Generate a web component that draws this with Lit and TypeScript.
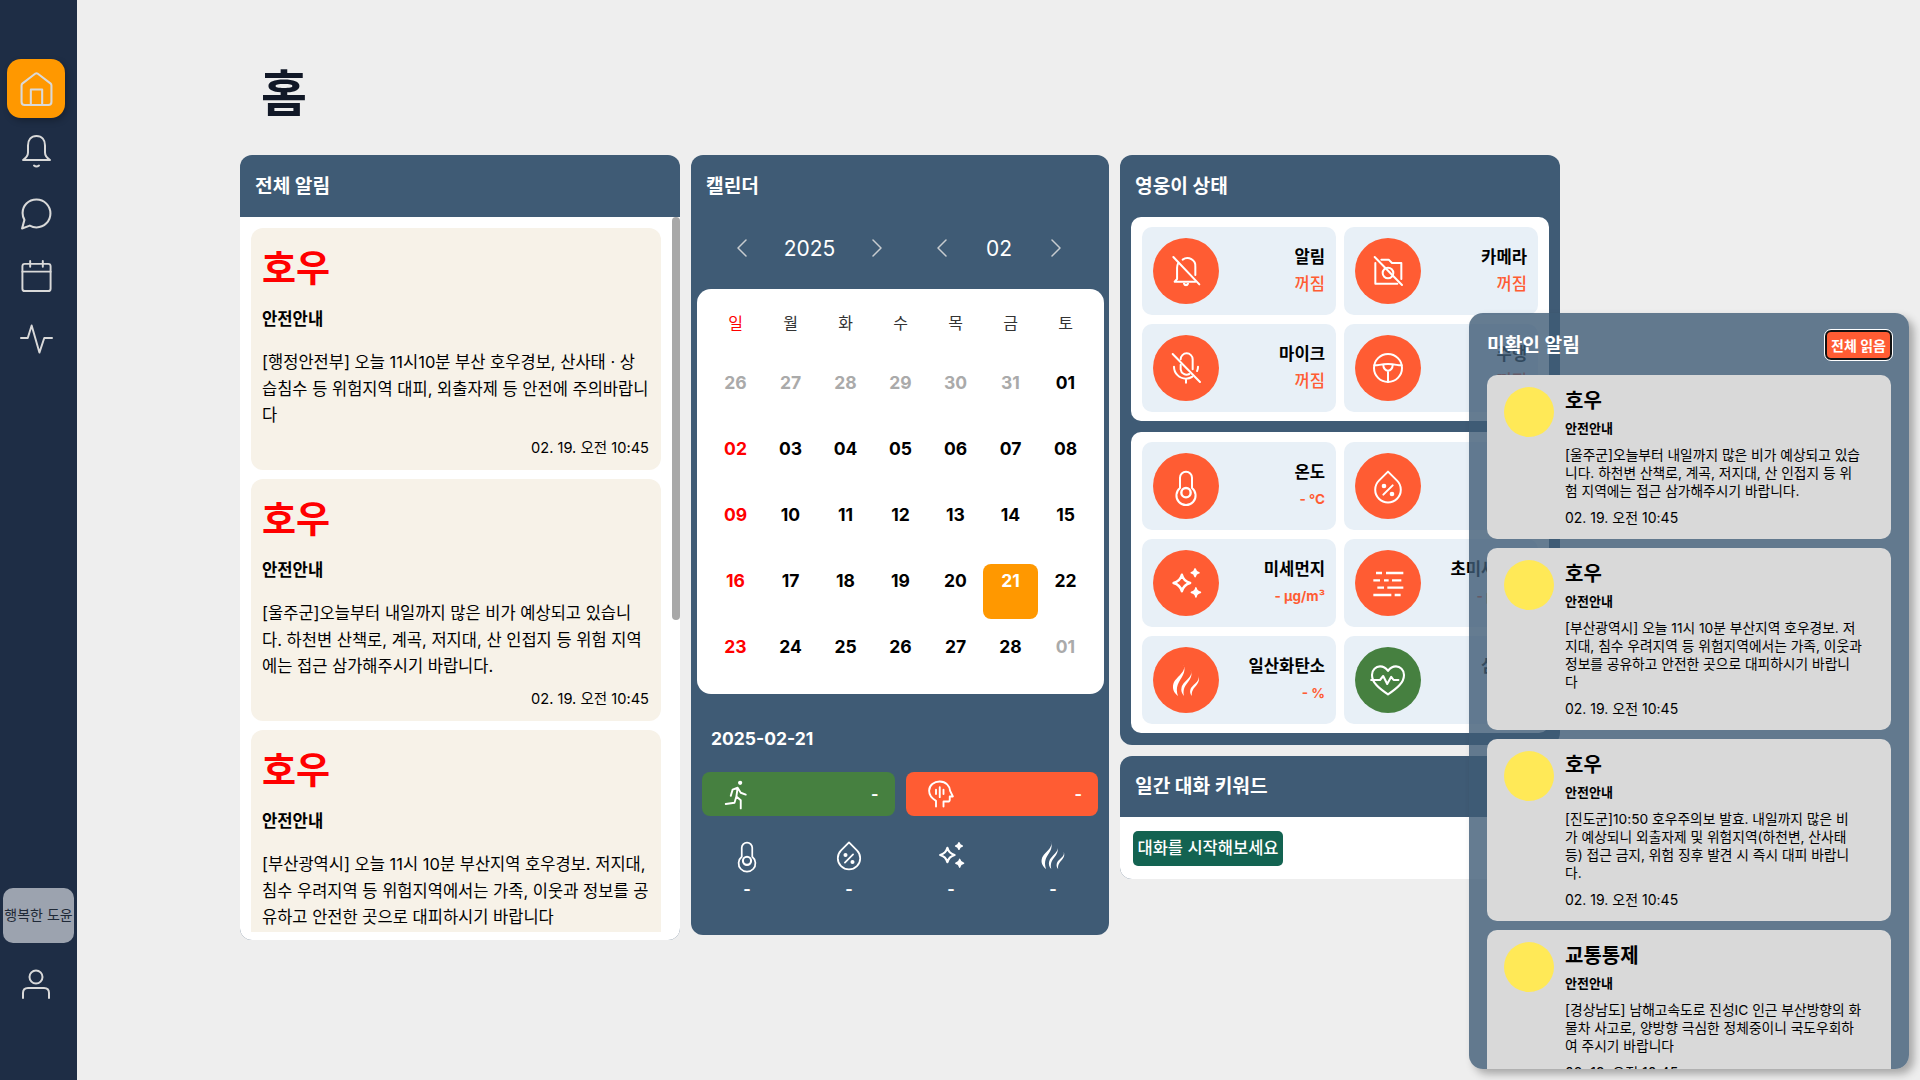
import {LitElement, html, css, svg} from 'lit';
import {customElement} from 'lit/decorators.js';

const icon = (body: unknown, cls = 'i24', box = '0 0 24 24') => html`<svg class=${cls} viewBox=${box} fill="none" stroke="currentColor" stroke-width="1.5" stroke-linecap="round" stroke-linejoin="round">${body}</svg>`;

const I = {
  home: svg`<path d="M1 13q0-1 1-2L14.500 1.500q1-.7 2 0L29 11q1 1 1 2v16a3 3 0 0 1-3 3H4a3 3 0 0 1-3-3z"/><path d="M10 32V17h11v15"/>`,
  bell: svg`<path d="M15.500 2c-5.500 0-8.500 4-8.500 9.500v7c0 3-2 5.500-5 7.500h27c-3-2-5-4.500-5-7.500v-7C24 6 21 2 15.500 2z"/><path d="M13 31.500c1.500 1.200 3.500 1.200 5 0"/>`,
  chat: svg`<path d="M16 2C8 2 2.500 8 2.500 15c0 2.500.7 4.800 1.800 6.700L2 30l7.500-2.700c2 1.100 4.200 1.700 6.500 1.700 7.500 0 13.500-6 13.500-13.500S23.500 2 16 2z"/>`,
  cal: svg`<rect x="2" y="5" width="29" height="28" rx="2.500"/><path d="M2 13h29M10 2v6M23 2v6"/>`,
  pulse: svg`<path d="M1 15h7L12 2l8 28 5-15h8"/>`,
  user: svg`<circle cx="15" cy="8" r="6.500"/><path d="M2 29v-5c0-3 2-5 5-5h16c3 0 5 2 5 5v5"/>`,
  left: svg`<path d="M9 1 1 9l8 8"/>`,
  right: svg`<path d="m1 1 8 8-8 8"/>`,
  bellOff: svg`<path d="M9.500 3.500A6 6 0 0 1 19 9v6M6 6.500C5.500 7.500 5.300 8.500 5.300 9.500V18L3.500 20H19"/><path d="M10.500 21.500c.5 1.500 2.500 1.500 3 0" fill="currentColor"/><path d="M2.500 1.500 22 22"/>`,
  camOff: svg`<path d="M2.500 6v15.500H19M22 18V6h-7l-2.500-2.500H7"/><circle cx="12" cy="13.500" r="4"/><path d="M2 1.500 22.500 22.500"/>`,
  micOff: svg`<path d="M8 5.500a4.500 4.500 0 0 1 9 0V13M8 9.500V13a4.500 4.500 0 0 0 6.500 3.500"/><path d="M3 11a9 9 0 0 0 9 9c1.800 0 3.500-.6 4.800-1.500M21 11c0 1.200-.2 2.300-.7 3.300M12 20v3"/><path d="M2 1.500 22.500 22.500"/>`,
  wheel: svg`<circle cx="12" cy="12" r="10.500"/><path d="M1.800 10c3 .2 4.500-1 10.200-1s7.200 1.200 10.200 1M8.500 10c0 2 1.500 4 3.500 4s3.500-2 3.500-4M12 14v8.500"/>`,
  thermo: svg`<path d="M7.500 13.500V5.800a4.500 4.500 0 0 1 9 0v7.700a7.200 7.200 0 1 1-9 0z"/><circle cx="12" cy="17" r="3.500" stroke-width="1.800"/>`,
  drop: svg`<path d="M12 1.200 5.200 8a9.600 9.600 0 1 0 13.600 0z"/><path d="m8.500 18.500 7-7"/><circle cx="9" cy="12" r="1" fill="currentColor"/><circle cx="15" cy="18" r="1" fill="currentColor"/>`,
  spark: svg`<g transform="translate(12 12) scale(1.240) translate(-12 -12)"><path d="M9.500 7c.8 3 2 4.200 5 5-3 .8-4.200 2-5 5-.8-3-2-4.200-5-5 3-.8 4.200-2 5-5z" stroke-width="1.500"/><path d="M17.500 3.500c.3 1.500.8 2 2.300 2.300-1.500.3-2 .8-2.300 2.300-.3-1.500-.8-2-2.300-2.300 1.500-.3 2-.8 2.300-2.300zM18 15c.3 1.700 1 2.400 2.700 2.700-1.700.3-2.400 1-2.700 2.700-.3-1.700-1-2.400-2.700-2.700 1.700-.3 2.400-1 2.700-2.700z" fill="currentColor" stroke-width="1"/></g>`,
  flame: svg`<g fill="currentColor" stroke="none"><path d="M10 0C13 6 4.200 9.500 2.500 15c-1 3.500.6 6.800 3.500 9-1-3-1.200-5.800-.2-8.500C7.500 11 13 6.500 10 0z"/><path d="M15.500 4.500c2.500 5-5.500 8-6.800 13-.7 2.500.2 4.800 1.800 6.500-.5-2-.5-4 .2-6 1.600-4 7.300-7.500 4.800-13.500z"/><path d="M21 9c2 4.500-5 6.500-5.800 10.500-.4 1.800.2 3.300 1.200 4.500-.2-1.500-.1-2.900.6-4.200C18.500 16.500 23.500 14 21 9z"/></g>`,
  heart: svg`<g transform="translate(12 12) scale(1.200) translate(-12 -12)"><path d="M12 21C6 17 2 13.500 2 8.800 2 5.500 4.500 3.500 7 3.500c2 0 3.700 1 5 2.800 1.300-1.800 3-2.800 5-2.800 2.500 0 5 2 5 5.300 0 4.700-4 8.200-10 12.200z" stroke-width="1.300"/><path d="M1.500 12h5.500l2-2.500 2.500 5 2.500-4.500 1.500 2h3" stroke-width="1.300"/></g>`,
  dust: svg`<path d="M3 4.500h4.500M10.500 4.500h13M1 10h5M9 10h3.500M15 10h7M4 15.500h5M11.500 15.500h12M1 21h13.500M17 21h4.500" stroke-width="1.700" stroke-linecap="butt"/>`,
  run: svg`<circle cx="14.500" cy="3" r="1.700" fill="currentColor" stroke="none"/><path d="M12.500 7 8.500 8.500l-1.500 5M12.500 7l-1 7 3.500 3v6.500M11.500 14l-1.500 5-7 1M12.500 7l2.500 4 4 1.500"/>`,
  face: svg`<path d="M8 22v-4.500C4.500 15.500 2.500 12.800 2.500 9.500 2.500 5 6.500 2 11 2c5 0 8 3.500 8.300 7.500l2.200 4.500h-2.500v2.500c0 1-.7 1.500-1.500 1.500H14v4"/><path d="M8 8.500v3.500M11 6.500v8M14 8.500v3.500"/>`,
};

const week = ['일', '월', '화', '수', '목', '금', '토'];
const days = ['26', '27', '28', '29', '30', '31', '01', '02', '03', '04', '05', '06', '07', '08', '09', '10', '11', '12', '13', '14', '15', '16', '17', '18', '19', '20', '21', '22', '23', '24', '25', '26', '27', '28', '01'];

const alerts = [
  {title: '호우', body: '[행정안전부] 오늘 11시10분 부산 호우경보, 산사태 · 상습침수 등 위험지역 대피, 외출자제 등 안전에 주의바랍니다'},
  {title: '호우', body: '[울주군]오늘부터 내일까지 많은 비가 예상되고 있습니다. 하천변 산책로, 계곡, 저지대, 산 인접지 등 위험 지역에는 접근 삼가해주시기 바랍니다.'},
  {title: '호우', body: '[부산광역시] 오늘 11시 10분 부산지역 호우경보. 저지대, 침수 우려지역 등 위험지역에서는 가족, 이웃과 정보를 공유하고 안전한 곳으로 대피하시기 바랍니다'},
];

const unread = [
  {title: '호우', body: '[울주군]오늘부터 내일까지 많은 비가 예상되고 있습니다. 하천변 산책로, 계곡, 저지대, 산 인접지 등 위험 지역에는 접근 삼가해주시기 바랍니다.'},
  {title: '호우', body: '[부산광역시] 오늘 11시 10분 부산지역 호우경보. 저지대, 침수 우려지역 등 위험지역에서는 가족, 이웃과 정보를 공유하고 안전한 곳으로 대피하시기 바랍니다'},
  {title: '호우', body: '[진도군]10:50 호우주의보 발효. 내일까지 많은 비\n가 예상되니 외출자제 및 위험지역(하천변, 산사태 등) 접근 금지, 위험 징후 발견 시 즉시 대피 바랍니\n다.'},
  {title: '교통통제', body: '[경상남도] 남해고속도로 진성IC 인근 부산방향의 화물차 사고로, 양방향 극심한 정체중이니 국도우회하여 주시기 바랍니다'},
];

const devices = [
  {icon: I.bellOff, name: '알림', value: '꺼짐'},
  {icon: I.camOff, name: '카메라', value: '꺼짐'},
  {icon: I.micOff, name: '마이크', value: '꺼짐'},
  {icon: I.wheel, name: '주행', value: '꺼짐'},
];

const sensors = [
  {icon: I.thermo, name: '온도', value: '- °C'},
  {icon: I.drop, name: '습도', value: '- %'},
  {icon: I.spark, name: '미세먼지', value: '- µg/m³'},
  {icon: I.dust, name: '초미세먼지', value: '- µg/m³'},
  {icon: I.flame, name: '일산화탄소', value: '- %'},
  {icon: I.heart, name: '심박수', value: '- bpm', ok: true},
];

const DATE = '02. 19. 오전 10:45';

@customElement('app-root')
export class AppRoot extends LitElement {
  static styles = css`
    :host {
      display: flex;
      width: 1920px;
      height: 1080px;
      overflow: hidden;
      position: relative;
      background: #eeeeee;
      color: #000;
      font-family: Inter, "Noto Sans CJK KR", sans-serif;
    }
    svg { display: block; overflow: visible; }
    .i24 { width: 32px; height: 32px; }

    .side {
      width: 77px;
      flex: none;
      box-sizing: border-box;
      background: #1e2d45;
      padding: 59px 0 0;
      display: flex;
      flex-direction: column;
      align-items: center;
      color: #d9d9d9;
    }
    .nav { width: 58px; height: 59px; margin-left: -5px; display: flex; align-items: center; justify-content: center; margin-bottom: 3.6px; }
    .nav svg { width: 33px; height: 34px; stroke-width: 2; }
    .nav.active { background: #ff9800; border-radius: 14px; box-shadow: 2px 3px 6px rgba(0, 0, 0, .25); }
    .helper {
      margin-top: auto;
      width: 71px;
      height: 55px;
      flex: none;
      box-sizing: border-box;
      padding-bottom: 4px;
      border-radius: 10px;
      background: #9ca3af;
      color: #1f2937;
      font-size: 14px;
      white-space: nowrap;
      display: flex;
      align-items: center;
      justify-content: center;
      overflow: hidden;
    }
    .me { margin: 26px 0 79px -5px; }
    .me svg { width: 30px; height: 32px; stroke-width: 2; }

    .main { flex: 1; padding-left: 163px; min-width: 0; }
    h1 { margin: 0; height: 155px; box-sizing: border-box; padding: 64px 0 0 21px; font-size: 50px; line-height: 60px; font-weight: 700; color: #111827; }
    .cols { display: flex; gap: 11px; align-items: flex-start; }

    .panel { background: #3f5b75; border-radius: 12px; overflow: hidden; color: #fff; }
    .head { height: 62px; box-sizing: border-box; padding: 0 15px 2px; display: flex; align-items: center; font-size: 19.2px; font-weight: 700; }

    .alerts { width: 440px; height: 785px; }
    .alert-list { position: relative; background: #fff; height: 723px; padding-bottom: 8px; box-sizing: border-box; color: #000; }
    .scroller { height: 100%; overflow: hidden; padding: 11px 19px 0 11px; box-sizing: border-box; }
    .thumb { position: absolute; top: 0; right: 0; width: 8px; height: 403px; background: #a8a8a8; border-radius: 4px; }
    .card { background: #f7f2e8; border-radius: 12px; padding: 14px 12px 0 11px; height: 242px; box-sizing: border-box; margin-bottom: 9px; overflow: hidden; }
    .card h3 { margin: 0; color: #f00; font-size: 37px; line-height: 54px; font-weight: 700; }
    .card h4 { margin: 11px 0 0; font-size: 16.64px; line-height: 24px; font-weight: 700; }
    .card p { margin: 18.2px 0 0; font-size: 16.5px; line-height: 26.5px; }
    .card time { display: block; margin-top: 8.5px; text-align: right; font-size: 14.6px; line-height: 22px; }

    .calendar { width: 418px; height: 780px; }
    .ym-row { display: flex; height: 62px; margin-bottom: 10px; align-items: center; padding-left: 46px; color: #c8ccd0; }
    .ym-row svg { width: 10px; height: 18px; flex: none; }
    .ym-val { color: #fff; font-size: 21px; text-align: center; }
    .y { width: 125px; }
    .m { width: 104px; }
    .gap { width: 55px; }
    .grid-box { margin: 0 5px 0 6px; background: #fff; border-radius: 14px; height: 405px; box-sizing: border-box; padding: 19px 11px 0 11px; color: #000; }
    .dow, .dates { display: grid; grid-template-columns: repeat(7, 55px); }
    .dow { height: 30px; margin-bottom: 28px; }
    .dow span { text-align: center; font-size: 16px; line-height: 30px; color: #333; }
    .dow .sun, .dates .sun { color: #f00; }
    .dates { row-gap: 11px; }
    .dates span { height: 55px; border-radius: 8px; text-align: center; font-size: 17.5px; line-height: 34px; font-weight: 700; }
    .dates .off { color: #aaaaaa; }
    .dates .sel { background: #ff9800; color: #fff; }
    .picked { margin: 33px 0 0 20px; font-size: 17.5px; line-height: 24px; font-weight: 700; }
    .bars { display: flex; gap: 11px; margin: 21px 11px 0; }
    .bar { flex: 1; height: 44px; border-radius: 8px; display: flex; align-items: center; justify-content: space-between; padding: 0 16px 0 20px; font-weight: 700; font-size: 16px; }
    .bar svg { width: 30px; height: 30px; }
    .green { background: #468040; }
    .orange { background: #ff5c33; }
    .sums { display: grid; grid-template-columns: repeat(4, 102px); margin: 25px 0 0 5px; }
    .sum { display: flex; flex-direction: column; align-items: center; gap: 10px; font-size: 16px; font-weight: 700; line-height: 20px; }
    .sum svg { width: 28px; height: 28px; }

    .right { width: 440px; display: flex; flex-direction: column; gap: 11px; }
    .status { height: 590px; }
    .tiles { margin: 0 11px 11px; background: #fff; border-radius: 10px; padding: 10px 11px 9px; display: grid; grid-template-columns: 194px 194px; gap: 9px 8px; }
    .tile { height: 88px; background: #e8f0f7; border-radius: 10px; display: flex; align-items: center; justify-content: space-between; padding: 0 11px; color: #000; }
    .dot { width: 66px; height: 66px; border-radius: 50%; background: #ff5c33; color: #fff; display: flex; align-items: center; justify-content: center; flex: none; }
    .dot.ok { background: #468040; }
    .txt { text-align: right; white-space: nowrap; padding-bottom: 2px; }
    .txt b { display: block; font-size: 16.64px; line-height: 26px; font-weight: 700; }
    .txt small { display: block; margin-top: 2px; font-size: 16.64px; line-height: 24px; color: #ff5c33; font-weight: 500; }
    .txt small.unit { font-size: 13.5px; font-weight: 700; }

    .keywords { height: 123px; }
    .keywords .head { height: 61px; padding-bottom: 3px; }
    .kw-body { background: #fff; height: 62px; padding: 14px 13px 0; box-sizing: border-box; }
    .chip { display: inline-block; height: 35px; line-height: 34px; padding: 0 4.5px; background: #136351; border-radius: 5px; color: #fff; font-size: 16.5px; font-weight: 500; }

    .popup {
      position: absolute;
      left: 1469px;
      top: 313px;
      width: 440px;
      height: 756px;
      box-sizing: border-box;
      padding: 0 18px;
      background: rgba(63, 91, 117, .8);
      border-radius: 14px;
      box-shadow: 5px 5px 8px rgba(0, 0, 0, .3);
      overflow: hidden;
      color: #000;
    }
    .pop-head { height: 62px; display: flex; align-items: center; justify-content: space-between; color: #fff; font-size: 19.2px; font-weight: 700; }
    .read { box-sizing: border-box; width: 67px; height: 30px; margin: 2px -1px 0 0; background: #ff5c33; border: 2px solid #111; outline: 1px solid #fff; border-radius: 6px; color: #fff; font: 700 14px Inter, "Noto Sans CJK KR", sans-serif; padding: 0; white-space: nowrap; }
    .note { display: flex; gap: 11px; background: #d9d9d9; border-radius: 10px; padding: 12px 17px 0; margin-bottom: 9px; box-sizing: border-box; }
    .sun-dot { width: 50px; height: 50px; border-radius: 50%; background: #ffe957; flex: none; }
    .note-text { width: 296.9px; }
    .note h3 { margin: 0; font-size: 20px; line-height: 28px; font-weight: 700; }
    .note h4 { margin: 3px 0 0; font-size: 13px; line-height: 20px; font-weight: 700; }
    .note p { margin: 8px 0 0; font-size: 13.76px; line-height: 18px; white-space: pre-line; }
    .note time { display: block; margin: 8px 0 11px; font-size: 14px; line-height: 20px; }
  `;

  tile(t: {icon: unknown; name: string; value: string; ok?: boolean}) {
    return html`<div class="tile">
      <div class="dot ${t.ok ? 'ok' : ''}">${icon(t.icon)}</div>
      <div class="txt"><b>${t.name}</b><small class=${t.value.startsWith('-') ? 'unit' : ''}>${t.value}</small></div>
    </div>`;
  }

  render() {
    return html`
      <aside class="side">
        <div class="nav active">${icon(I.home, 'n', '0 0 31 33')}</div>
        <div class="nav">${icon(I.bell, 'n', '0 0 31 34')}</div>
        <div class="nav">${icon(I.chat, 'n', '0 0 32 32')}</div>
        <div class="nav">${icon(I.cal, 'n', '0 0 33 35')}</div>
        <div class="nav">${icon(I.pulse, 'n', '0 0 34 32')}</div>
        <div class="helper">행복한 도윤</div>
        <div class="me">${icon(I.user, 'n', '0 0 30 32')}</div>
      </aside>

      <main class="main">
        <h1>홈</h1>
        <div class="cols">
          <section class="panel alerts">
            <div class="head">전체 알림</div>
            <div class="alert-list">
              <div class="scroller">
                ${alerts.map((a) => html`<article class="card">
                  <h3>${a.title}</h3>
                  <h4>안전안내</h4>
                  <p>${a.body}</p>
                  <time>${DATE}</time>
                </article>`)}
              </div>
              <div class="thumb"></div>
            </div>
          </section>

          <section class="panel calendar">
            <div class="head">캘린더</div>
            <div class="ym-row">
              ${icon(I.left, '', '0 0 10 18')}
              <span class="ym-val y">2025</span>
              ${icon(I.right, '', '0 0 10 18')}
              <span class="gap"></span>
              ${icon(I.left, '', '0 0 10 18')}
              <span class="ym-val m">02</span>
              ${icon(I.right, '', '0 0 10 18')}
            </div>
            <div class="grid-box">
              <div class="dow">${week.map((d, i) => html`<span class=${i === 0 ? 'sun' : ''}>${d}</span>`)}</div>
              <div class="dates">
                ${days.map((d, i) => {
                  const off = i < 6 || i === 34;
                  const cls = [off ? 'off' : '', !off && i % 7 === 0 ? 'sun' : '', i === 26 ? 'sel' : ''].join(' ');
                  return html`<span class=${cls}>${d}</span>`;
                })}
              </div>
            </div>
            <div class="picked">2025-02-21</div>
            <div class="bars">
              <div class="bar green">${icon(I.run)}<span>-</span></div>
              <div class="bar orange">${icon(I.face)}<span>-</span></div>
            </div>
            <div class="sums">
              ${[I.thermo, I.drop, I.spark, I.flame].map((s) => html`<div class="sum">${icon(s)}<span>-</span></div>`)}
            </div>
          </section>

          <div class="right">
            <section class="panel status">
              <div class="head">영웅이 상태</div>
              <div class="tiles">${devices.map((d) => this.tile(d))}</div>
              <div class="tiles">${sensors.map((d) => this.tile(d))}</div>
            </section>
            <section class="panel keywords">
              <div class="head">일간 대화 키워드</div>
              <div class="kw-body"><span class="chip">대화를 시작해보세요</span></div>
            </section>
          </div>
        </div>
      </main>

      <aside class="popup">
        <div class="pop-head"><span>미확인 알림</span><button class="read">전체 읽음</button></div>
        ${unread.map((n) => html`<article class="note">
          <div class="sun-dot"></div>
          <div class="note-text">
            <h3>${n.title}</h3>
            <h4>안전안내</h4>
            <p>${n.body}</p>
            <time>${DATE}</time>
          </div>
        </article>`)}
      </aside>
    `;
  }
}
